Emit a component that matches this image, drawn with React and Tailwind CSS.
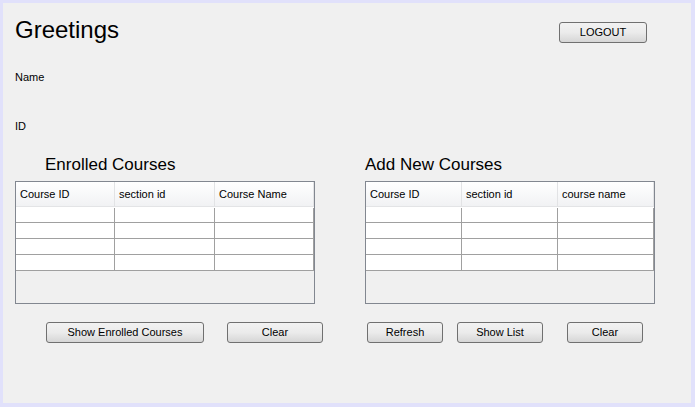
import React from 'react';

const enrolledCols = [
  { label: 'Course ID', w: 'w-[99px]' },
  { label: 'section id', w: 'w-[100px]' },
  { label: 'Course Name', w: 'w-[99px]' },
];

const newCols = [
  { label: 'Course ID', w: 'w-[96px]' },
  { label: 'section id', w: 'w-[96px]' },
  { label: 'course name', w: 'w-[96px]' },
];

function WinButton({ children, className = '' }) {
  return (
    <button
      type="button"
      className={`h-[21px] shrink-0 rounded-[3px] border border-[#707070] bg-gradient-to-b from-[#f2f2f2] via-[#ebebeb] to-[#d6d6d6] text-[11px] leading-none text-black ${className}`}
    >
      {children}
    </button>
  );
}

function CourseTable({ columns, width }) {
  const rows = [0, 1, 2, 3];
  return (
    <div className={`flex h-[123px] ${width} flex-col border border-[#828790] bg-[#f0f0f0]`}>
      <div className="flex h-[25px] bg-gradient-to-b from-white to-[#f1f2f4] border-b border-[#e3e4e6]">
        {columns.map((c) => (
          <div
            key={c.label}
            className={`${c.w} flex items-center border-r border-[#e2e3e5] pl-[4px] pt-[1px] text-[11px]`}
          >
            {c.label}
          </div>
        ))}
      </div>
      <div className="h-[1px] bg-white" />
      {rows.map((r) => (
        <div key={r} className={`flex ${r === 0 ? 'h-[15px]' : 'h-[16px]'} bg-white border-b border-[#a0a0a0]`}>
          {columns.map((c) => (
            <div key={c.label} className={`${c.w} border-r border-[#a0a0a0]`} />
          ))}
        </div>
      ))}
    </div>
  );
}

export default function App() {
  return (
    <div
      className="h-[407px] w-[695px] bg-[#e1e1fb] pt-[3px] pl-[3px] pr-[4px] pb-[4px] text-black"
      style={{ fontFamily: '"Liberation Sans", Arial, sans-serif' }}
    >
      <div className="flex h-full flex-col bg-[#f0f0f0] pl-[12px]">
        <div className="mt-[13px] flex items-start">
          <h1 className="text-[24px] leading-[28px]">Greetings</h1>
          <WinButton className="ml-auto mr-[44px] mt-[6px] w-[88px]">LOGOUT</WinButton>
        </div>

        <p className="mt-[26px] text-[11px] leading-[14px]">Name</p>
        <p className="mt-[35px] text-[11px] leading-[14px]">ID</p>

        <div className="mt-[22px] flex">
          <div className="flex w-[300px] shrink-0 flex-col">
            <h2 className="pl-[30px] text-[17px] leading-[20px]">Enrolled Courses</h2>
            <div className="mt-[6px]">
              <CourseTable columns={enrolledCols} width="w-[300px]" />
            </div>
            <div className="mt-[18px] flex">
              <WinButton className="ml-[31px] w-[158px]">Show Enrolled Courses</WinButton>
              <WinButton className="ml-[23px] w-[96px]">Clear</WinButton>
            </div>
          </div>

          <div className="ml-[50px] flex w-[290px] shrink-0 flex-col">
            <h2 className="text-[17px] leading-[20px]">Add New Courses</h2>
            <div className="mt-[6px]">
              <CourseTable columns={newCols} width="w-[290px]" />
            </div>
            <div className="mt-[18px] flex">
              <WinButton className="ml-[2px] w-[76px]">Refresh</WinButton>
              <WinButton className="ml-[14px] w-[86px]">Show List</WinButton>
              <WinButton className="ml-[24px] w-[76px]">Clear</WinButton>
            </div>
          </div>
        </div>
      </div>
    </div>
  );
}
